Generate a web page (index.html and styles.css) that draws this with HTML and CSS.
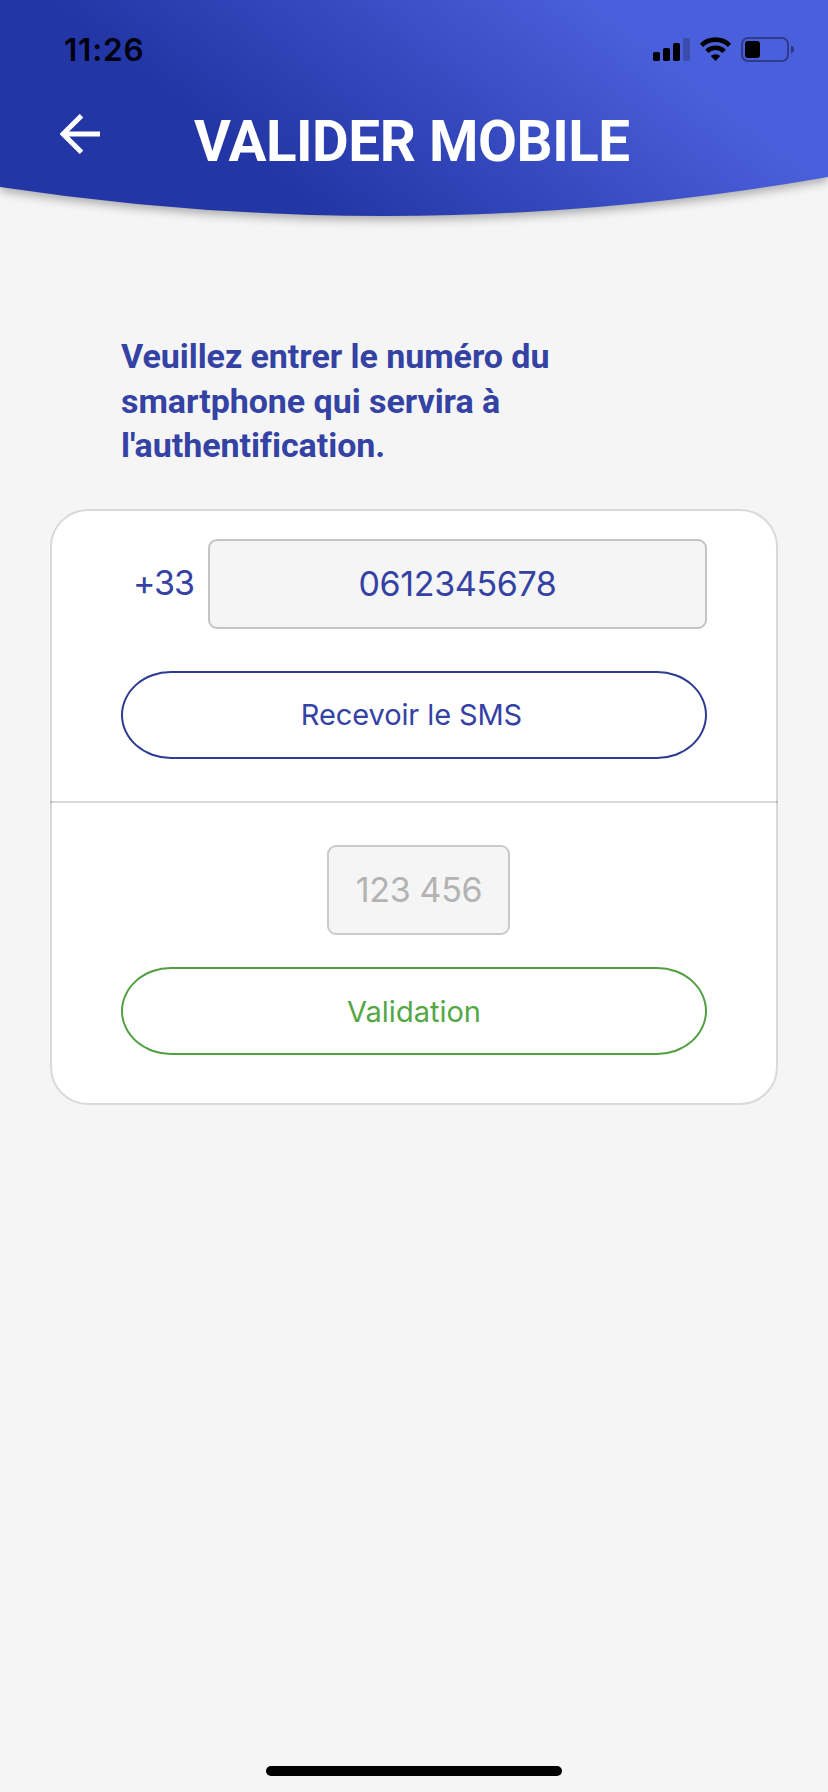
FILE: index.html
```
<!DOCTYPE html>
<html lang="fr">
<head>
    <meta charset="UTF-8">
    <title>Valider mobile</title>
    <link rel="stylesheet" href="styles.css">
</head>
<body>
    <header class="header">
        <svg class="header-bg" width="828" height="240" viewBox="0 0 828 240">
            <defs>
                <linearGradient id="blue" gradientUnits="userSpaceOnUse" x1="50" y1="0" x2="255" y2="-264">
                    <stop offset="0" stop-color="#2336a5"/>
                    <stop offset="1" stop-color="#4a5fdb"/>
                </linearGradient>
            </defs>
            <path d="M0 0H828V177Q414 249.7 0 187Z" fill="url(#blue)"/>
        </svg>
        <div class="status-bar">
            <span class="time">11:26</span>
            <svg class="status-icons" width="144" height="28" viewBox="0 0 144 28">
                <rect x="0" y="16" width="7" height="9" rx="1.8"/>
                <rect x="10" y="12" width="7" height="13" rx="1.8"/>
                <rect x="20" y="7" width="7" height="18" rx="1.8"/>
                <rect x="30" y="2" width="7" height="23" rx="1.8" opacity=".2"/>
                <g fill="none" stroke="#000" stroke-width="4.6">
                    <path d="M48.500 9.300a20 20 0 0 1 28 0"/>
                    <path d="M53.800 15.300a12.500 12.500 0 0 1 17.400 0"/>
                </g>
                <path d="M62.500 25l-4.700-4.900a6.800 6.800 0 0 1 9.400 0z"/>
                <rect x="89" y="2" width="46" height="23" rx="6" fill="none" stroke="#000" stroke-width="2" opacity=".38"/>
                <rect x="92" y="5" width="15" height="17" rx="3"/>
                <path d="M138 9.500c4 1.500 4 6.500 0 8z" opacity=".42"/>
            </svg>
        </div>
        <div class="title-bar">
            <svg class="back" width="40" height="40" viewBox="0 0 40 40">
                <path d="M40 20H3M21.500 1.700L3 20l18.500 18.300" fill="none" stroke="#fff" stroke-width="5"/>
            </svg>
            <h1>VALIDER MOBILE</h1>
        </div>
    </header>

    <main>
        <p class="intro">Veuillez entrer le numéro du<br>smartphone qui servira à<br>l'authentification.</p>
        <form class="card">
            <div class="phone">
                <div class="phone-row">
                    <label for="phone">+33</label>
                    <input type="text" id="phone" value="0612345678">
                </div>
                <button type="button" class="btn btn-blue">Recevoir le SMS</button>
            </div>
            <div class="code">
                <input type="text" id="code" placeholder="123 456">
                <button type="button" class="btn btn-green">Validation</button>
            </div>
        </form>
    </main>

    <div class="home-bar"></div>
</body>
</html>
```

FILE: styles.css
```
* {
    box-sizing: border-box;
}
body {
    margin: 0;
    height: 1792px;
    display: flex;
    flex-direction: column;
    font-family: Inter, sans-serif;
    background-color: #f5f5f5;
    color: #3442a4;
}
.header {
    position: relative;
    height: 240px;
}
/* curved background, behind the status bar and the title */
.header-bg {
    position: absolute;
    top: 0;
    left: 0;
    z-index: -1;
    filter: drop-shadow(0 4px 5px rgba(0, 0, 0, 0.3));
}
.status-bar {
    display: flex;
    justify-content: space-between;
    padding: 36px 31px 0 64px;
    height: 100px;
}
.time {
    font-size: 31.5px;
    font-weight: 600;
    line-height: 28px;
    letter-spacing: 0.8px;
    color: #00000f;
}
.title-bar {
    display: flex;
    padding-left: 60px;
}
.back {
    margin-top: 14px;
}
h1 {
    margin: 8px 0 0 94px;
    font-family: Roboto, sans-serif;
    font-size: 56.5px;
    font-weight: 700;
    line-height: 68px;
    letter-spacing: -0.45px;
    color: #fff;
    white-space: nowrap;
}
main {
    flex: 1;
}
.intro {
    margin: 94px 0 41.2px 121px;
    font-family: Roboto, sans-serif;
    font-size: 34px;
    font-weight: 700;
    line-height: 44.6px;
    letter-spacing: -0.05px;
}
.card {
    margin: 0 50px;
    height: 596px;
    border: 2px solid #d9d9d9;
    border-radius: 38px;
    background-color: #fff;
}
.phone {
    height: 292px;
    margin: 0 -2px;
    padding: 28px 71px 0;
    border-bottom: 2px solid rgba(0, 0, 0, 0.15);
}
.phone-row {
    display: flex;
    align-items: center;
    justify-content: space-between;
    margin-bottom: 42px;
}
label {
    margin-left: 12px;
    font-size: 34px;
    line-height: 38px;
    padding-bottom: 2px;
    letter-spacing: -1.1px;
}
input {
    height: 90px;
    padding: 0 0 1px;
    border: 2px solid #c4c4c4;
    border-radius: 9px;
    background-color: #f5f5f5;
    font-family: inherit;
    font-size: 34px;
    letter-spacing: -0.35px;
    color: inherit;
    text-align: center;
}
input::placeholder {
    color: #b3b3b3;
}
#phone {
    width: 499px;
}
#code {
    display: block;
    width: 183px;
    margin: 0 0 32px 206px;
    padding-left: 1px;
    border-color: #cacaca;
}
.code {
    padding: 42px 69px 0;
}
.btn {
    display: block;
    width: 586px;
    height: 88px;
    padding: 0;
    border: 2px solid #2d3c92;
    border-radius: 50px / 44px;
    background-color: #fff;
    font-family: inherit;
    font-size: 29px;
    color: inherit;
}
.btn-blue {
    padding: 0 5px 0 0;
    letter-spacing: -0.1px;
}
.btn-green {
    padding-top: 1px;
    border-color: #53a042;
    color: #53a744;
}
.home-bar {
    width: 296px;
    height: 10px;
    margin: 0 auto 16px;
    border-radius: 5px;
    background-color: #000;
}
```
